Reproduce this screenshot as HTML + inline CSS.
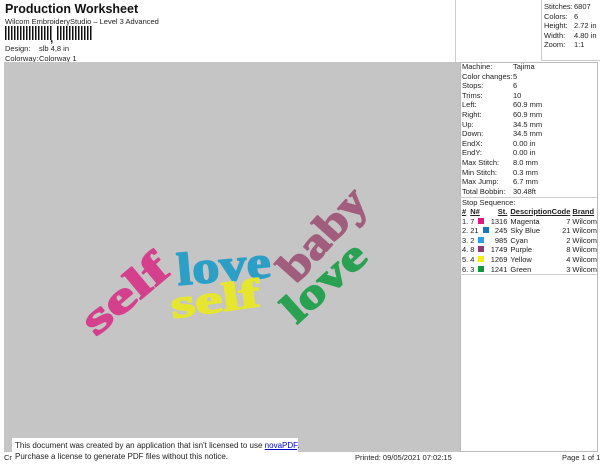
<!DOCTYPE html>
<html><head><meta charset="utf-8"><style>
*{margin:0;padding:0;box-sizing:border-box}
body{width:600px;height:464px;background:#fff;font-family:"Liberation Sans",sans-serif;position:relative;overflow:hidden;color:#222}
.a{position:absolute;white-space:nowrap}
.s{font-size:7.5px}
table{border-collapse:collapse;font-size:7.5px;line-height:9.6px}
td{padding:0;height:9.6px;white-space:nowrap}
</style></head><body>
<div class="a" style="left:5px;top:2px;font-size:12.5px;font-weight:bold;color:#111">Production Worksheet</div>
<div class="a s" style="left:5px;top:17px">Wilcom EmbroideryStudio – Level 3 Advanced</div>
<div class="a" style="left:5px;top:26px;width:48px;height:14px;background:repeating-linear-gradient(90deg,#111 0 1.5px,#fff 1.5px 3px)"></div>
<div class="a" style="left:50px;top:31px;font-size:12px;font-weight:bold">,</div>
<div class="a" style="left:57px;top:26px;width:36px;height:14px;background:repeating-linear-gradient(90deg,#111 0 1.5px,#fff 1.5px 3px)"></div>
<div class="a s" style="left:5px;top:44px">Design:</div><div class="a s" style="left:39px;top:44px">slb 4,8 in</div>
<div class="a s" style="left:5px;top:54px">Colorway:</div><div class="a s" style="left:39px;top:54px">Colorway 1</div>
<div class="a" style="left:455px;top:0;width:1px;height:62px;background:#ccc"></div>
<div class="a" style="left:541px;top:0;width:59px;height:61px;border-left:1px solid #ccc;border-bottom:1px solid #ccc"></div>
<table class="a" style="left:544px;top:2px"><tr><td style="width:30px">Stitches:</td><td>6807</td></tr><tr><td>Colors:</td><td>6</td></tr><tr><td>Height:</td><td>2.72 in</td></tr><tr><td>Width:</td><td>4.80 in</td></tr><tr><td>Zoom:</td><td>1:1</td></tr></table>
<div class="a" style="left:4px;top:62px;width:456px;height:390px;background:#c5c5c5"></div>
<div class="a" style="left:460px;top:62px;width:138px;height:390px;border:1px solid #bbb;background:#fff"></div>
<table class="a" style="left:462px;top:62px"><tr><td style="width:51px">Machine:</td><td>Tajima</td></tr><tr><td>Color changes:</td><td>5</td></tr><tr><td>Stops:</td><td>6</td></tr><tr><td>Trims:</td><td>10</td></tr><tr><td>Left:</td><td>60.9 mm</td></tr><tr><td>Right:</td><td>60.9 mm</td></tr><tr><td>Up:</td><td>34.5 mm</td></tr><tr><td>Down:</td><td>34.5 mm</td></tr><tr><td>EndX:</td><td>0.00 in</td></tr><tr><td>EndY:</td><td>0.00 in</td></tr><tr><td>Max Stitch:</td><td>8.0 mm</td></tr><tr><td>Min Stitch:</td><td>0.3 mm</td></tr><tr><td>Max Jump:</td><td>6.7 mm</td></tr><tr><td>Total Bobbin:</td><td>30.48ft</td></tr></table>
<div class="a" style="left:460px;top:197px;width:138px;border-top:1px solid #ccc"></div>
<div class="a s" style="left:462px;top:198px">Stop Sequence:</div>
<table class="a" style="left:462px;top:207px;width:135px">
<tr style="font-weight:bold;text-decoration:underline"><td style="width:9px">#</td><td style="width:20px">N#</td><td style="width:18px;text-align:right">St.</td><td style="padding-left:3px">Description</td><td style="text-align:right">Code</td><td style="padding-left:2px">Brand</td></tr>
<tr><td>1.</td><td>7 <span style="display:inline-block;width:6px;height:6px;background:#e0187f;margin-left:2px"></span></td><td style="text-align:right">1316</td><td style="padding-left:3px">Magenta</td><td style="text-align:right">7</td><td style="padding-left:2px">Wilcom</td></tr>
<tr><td>2.</td><td>21 <span style="display:inline-block;width:6px;height:6px;background:#1a78c2;margin-left:2px"></span></td><td style="text-align:right">245</td><td style="padding-left:3px">Sky Blue</td><td style="text-align:right">21</td><td style="padding-left:2px">Wilcom</td></tr>
<tr><td>3.</td><td>2 <span style="display:inline-block;width:6px;height:6px;background:#2aa0e6;margin-left:2px"></span></td><td style="text-align:right">985</td><td style="padding-left:3px">Cyan</td><td style="text-align:right">2</td><td style="padding-left:2px">Wilcom</td></tr>
<tr><td>4.</td><td>8 <span style="display:inline-block;width:6px;height:6px;background:#8e3a78;margin-left:2px"></span></td><td style="text-align:right">1749</td><td style="padding-left:3px">Purple</td><td style="text-align:right">8</td><td style="padding-left:2px">Wilcom</td></tr>
<tr><td>5.</td><td>4 <span style="display:inline-block;width:6px;height:6px;background:#f2ee10;margin-left:2px"></span></td><td style="text-align:right">1269</td><td style="padding-left:3px">Yellow</td><td style="text-align:right">4</td><td style="padding-left:2px">Wilcom</td></tr>
<tr><td>6.</td><td>3 <span style="display:inline-block;width:6px;height:6px;background:#109a3e;margin-left:2px"></span></td><td style="text-align:right">1241</td><td style="padding-left:3px">Green</td><td style="text-align:right">3</td><td style="padding-left:2px">Wilcom</td></tr>
</table>
<div class="a" style="left:460px;top:274px;width:138px;border-top:1px solid #ccc"></div>
<svg class="a" style="left:0;top:0" width="460" height="464" font-family="Liberation Serif,serif" font-weight="bold" stroke-width="1.5" stroke-linejoin="round">
<text x="0" y="0" font-size="44" fill="#d4408c" stroke="#d4408c" transform="translate(134,305) rotate(-40)" text-anchor="middle" textLength="100" lengthAdjust="spacingAndGlyphs">self</text>
<text x="0" y="0" font-size="46" fill="#2c9fc6" stroke="#2c9fc6" transform="translate(225,281) rotate(-5)" text-anchor="middle" textLength="94" lengthAdjust="spacingAndGlyphs">love</text>
<text x="0" y="0" font-size="44" fill="#a05e7c" stroke="#a05e7c" transform="translate(333,244) rotate(-48)" text-anchor="middle" textLength="110" lengthAdjust="spacingAndGlyphs">baby</text>
<text x="0" y="0" font-size="40" fill="#e6e630" stroke="#e6e630" transform="translate(217,312) rotate(-8)" text-anchor="middle" textLength="90" lengthAdjust="spacingAndGlyphs">self</text>
<text x="0" y="0" font-size="42" fill="#2aa152" stroke="#2aa152" transform="translate(333,292) rotate(-42)" text-anchor="middle" textLength="98" lengthAdjust="spacingAndGlyphs">love</text>
</svg>
<div class="a s" style="left:4px;top:453px">Cr</div>
<div class="a s" style="left:355px;top:453px">Printed: 09/05/2021 07:02:15</div>
<div class="a s" style="left:562px;top:453px">Page 1 of 1</div>
<div class="a" style="left:12px;top:438px;width:286px;height:26px;background:#fff"></div>
<div class="a s" style="left:15px;top:441px;font-size:8px">This document was created by an application that isn't licensed to use <span style="color:#0000cc;text-decoration:underline">novaPDF</span>.</div>
<div class="a s" style="left:15px;top:452px;font-size:8px">Purchase a license to generate PDF files without this notice.</div>
</body></html>
